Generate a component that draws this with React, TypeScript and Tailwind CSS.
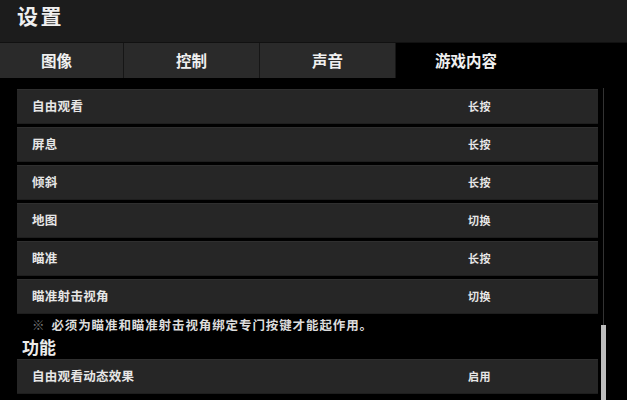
import React from 'react';

const TABS = [
  { label: '图像', w: 'w-[124px] pr-[10px]', active: false },
  { label: '控制', w: 'w-[136px]', active: false },
  { label: '声音', w: 'w-[136px]', active: false },
  { label: '游戏内容', w: 'w-[140px]', active: true },
];

const CONTROLS = [
  { name: '自由观看', value: '长按' },
  { name: '屏息', value: '长按' },
  { name: '倾斜', value: '长按' },
  { name: '地图', value: '切换' },
  { name: '瞄准', value: '长按' },
  { name: '瞄准射击视角', value: '切换' },
];

const font = { fontFamily: '"Noto Sans CJK SC", "Noto Sans", sans-serif' };

const Row = ({ name, value }: { name: string; value: string }) => (
  <div className="flex-none flex items-center h-[35px] w-[581px] bg-[#262626] border-t border-[#2f2f2f] border-b border-b-[#1e1e1e]">
    <span className="w-[451px] pl-[15px] text-[12.5px] font-bold text-[#e6e6e6] tracking-[0.3px]">{name}</span>
    <span className="text-[11px] font-bold text-[#e6e6e6] tracking-[0.5px]">{value}</span>
  </div>
);

export default function App() {
  return (
    <div className="w-[627px] h-[400px] bg-black overflow-hidden flex flex-col" style={font}>
      <div className="h-[43px] flex-none bg-[#1c1c1c] border-b border-[#111]">
        <div className="pl-[17px] text-[21px] leading-[30px] font-bold text-[#efefef] tracking-[2.5px]">设置</div>
      </div>

      <div className="h-[35px] flex-none flex">
        {TABS.map(tab => (
          <div
            key={tab.label}
            className={`${tab.w} flex-none flex items-center justify-center text-[15.5px] font-bold text-[#f0f0f0] ${
              tab.active ? 'bg-black' : 'bg-[#2a2a2a] border-r border-[#161616]'
            }`}
          >
            {tab.label}
          </div>
        ))}
        <div className="flex-1 bg-black" />
      </div>

      <div className="flex-1 flex min-h-0">
        <div className="w-[598px] pl-[17px] pt-[11px] flex flex-col">
          <div className="flex flex-col gap-[3px]">
            {CONTROLS.map(c => (
              <Row key={c.name} name={c.name} value={c.value} />
            ))}
          </div>
          <div className="flex-none h-[22px] pl-[15px] flex items-center text-[12.5px] font-bold text-[#dcdcdc] tracking-[0.9px]">
            <span className="text-[#777] mr-[6px]">※</span>必须为瞄准和瞄准射击视角绑定专门按键才能起作用。
          </div>
          <div className="flex-none h-[22px] pl-[5px] flex items-center text-[17px] font-bold text-[#ececec]">功能</div>
          <div className="mt-[1px]">
            <Row name="自由观看动态效果" value="启用" />
          </div>
        </div>
        <div className="flex-1 pt-[10px] flex flex-col">
          <div className="h-[237px] flex-none ml-[5px] w-px bg-[#333]" />
          <div className="flex-1 ml-[3px] w-[5px] bg-[#bdbdbd]" />
        </div>
      </div>
    </div>
  );
}
